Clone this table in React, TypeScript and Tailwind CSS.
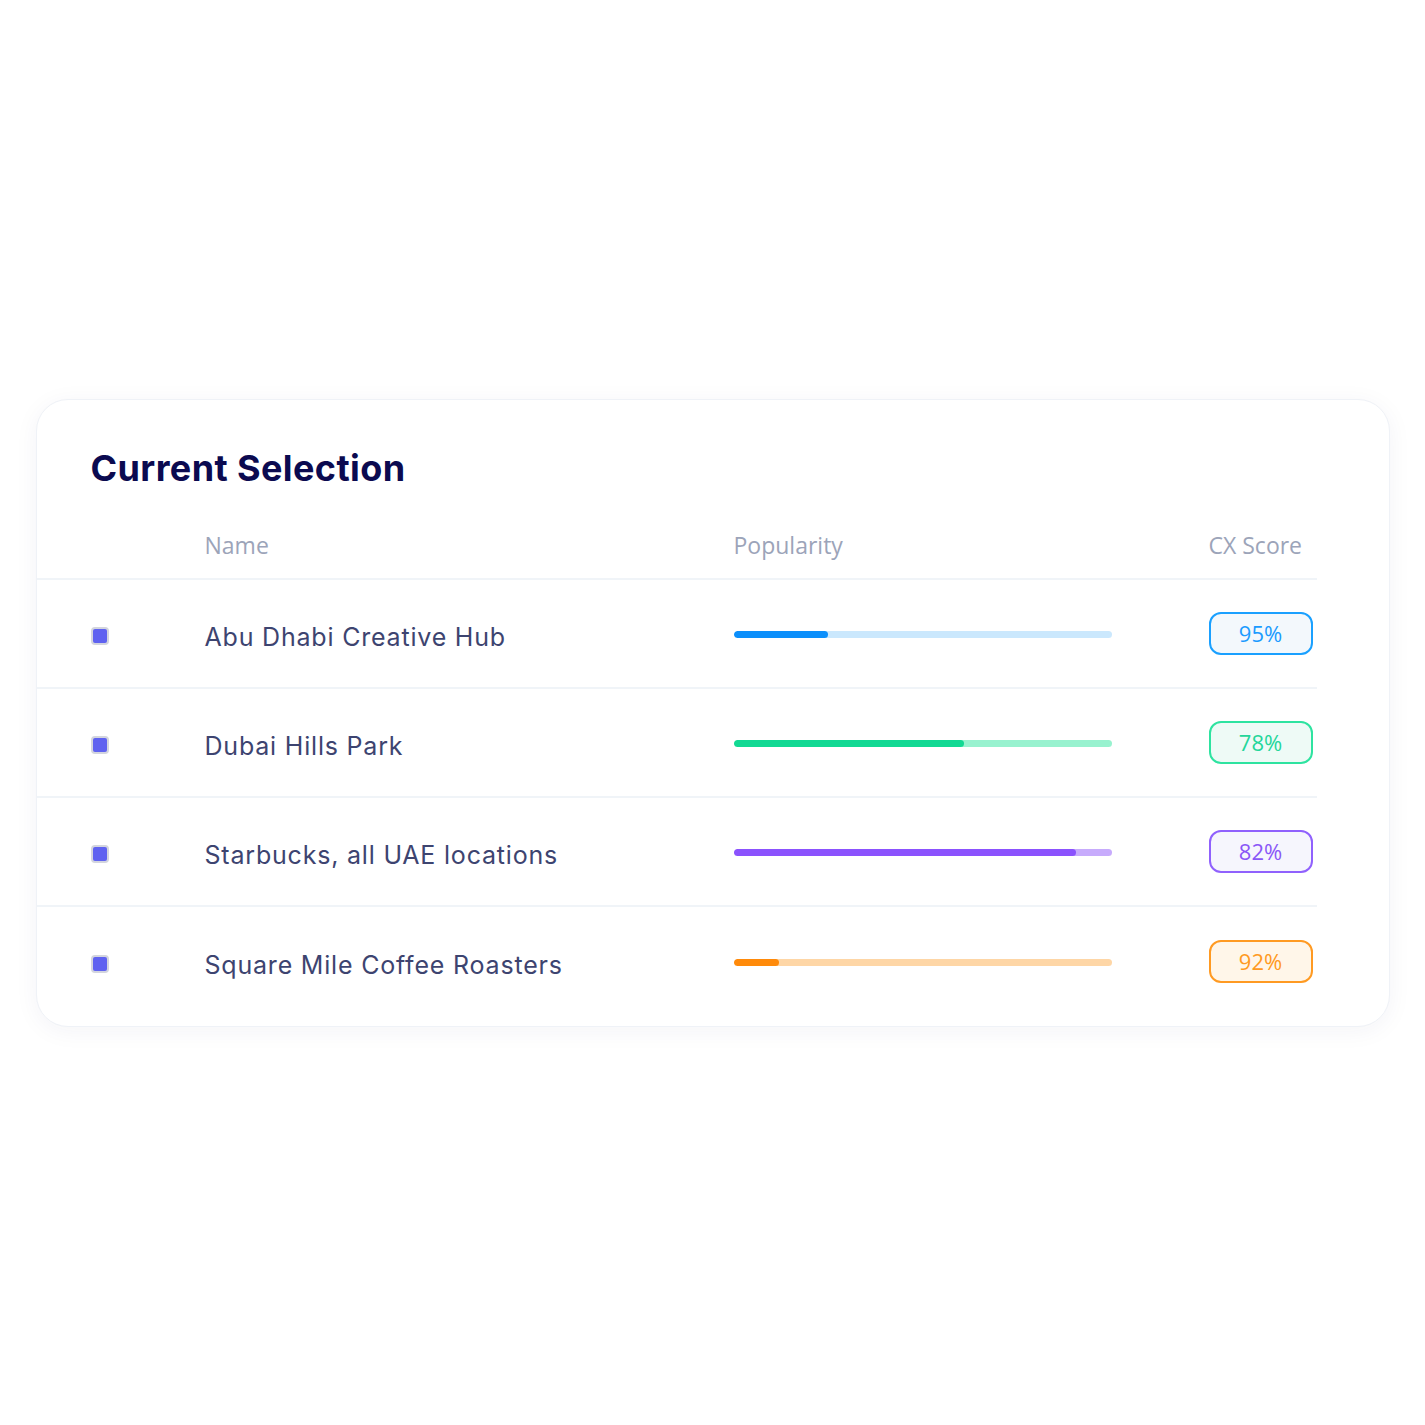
const rows = [
  {
    name: "Abu Dhabi Creative Hub",
    fill: 25,
    bar: "bg-[#0b8ffb]",
    track: "bg-[#cbe8fd]",
    score: "95%",
    badge: "border-[#1aa0ff] bg-[#f3f8fc] text-[#1a9bff]",
  },
  {
    name: "Dubai Hills Park",
    fill: 61,
    bar: "bg-[#12d993]",
    track: "bg-[#98f2cf]",
    score: "78%",
    badge: "border-[#2ee3a0] bg-[#eefaf6] text-[#24d69a]",
  },
  {
    name: "Starbucks, all UAE locations",
    fill: 90.5,
    bar: "bg-[#8b52fd]",
    track: "bg-[#c7abfc]",
    score: "82%",
    badge: "border-[#9061fd] bg-[#f6f6fd] text-[#8a57f7]",
  },
  {
    name: "Square Mile Coffee Roasters",
    fill: 12,
    bar: "bg-[#ff8a0a]",
    track: "bg-[#fed6a6]",
    score: "92%",
    badge: "border-[#ff9a22] bg-[#fff6e9] text-[#ff9a22]",
  },
];

export default function App() {
  return (
    <div className="min-h-[1425px] w-full bg-white flex items-center justify-center">
      <div className="w-[1354px] rounded-[32px] bg-white border border-[#eff2f7] shadow-[0_4px_24px_rgba(30,40,90,0.05)] pt-[40px] pb-[10px]">
        <h2 className="px-[54px] text-[36px] leading-[56px] font-bold text-[#0b0a50] [font-family:Inter,sans-serif] tracking-[0.4px]">
          Current Selection
        </h2>
        <div className="mr-[72px]">
          <div className="flex items-center pl-[54px] pt-[34px] pb-[18px] border-b-2 border-[#f0f4f8] text-[23px] leading-[30px] text-[#9ca4b9] [font-family:'Open_Sans',sans-serif]">
            <div className="w-[114px]" />
            <div className="w-[529px]">Name</div>
            <div className="w-[475px]">Popularity</div>
            <div>CX Score</div>
          </div>
          {rows.map((r, i) => (
            <div
              key={r.name}
              className={
                "flex items-center pl-[54px] h-[109px] " +
                (i < rows.length - 1 ? "border-b-2 border-[#f0f4f8]" : "")
              }
            >
              <div className="w-[114px] flex items-center">
                <span className="mt-[5px] size-[18px] rounded-[4px] bg-[#5f62f0] border-2 border-[#d3d5de]" />
              </div>
              <div className="w-[529px] pt-[9px] text-[25px] tracking-[0.8px] text-[#3d4470] [font-family:Inter,sans-serif]">
                {r.name}
              </div>
              <div className={"mt-[2px] w-[378px] h-[7px] rounded-full overflow-hidden " + r.track}>
                <div className={"h-full rounded-full " + r.bar} style={{ width: `${r.fill}%` }} />
              </div>
              <div className="w-[97px]" />
              <div
                className={
                  "w-[104px] h-[43px] rounded-[12px] border-2 flex items-center justify-center text-[22px] [font-family:'Open_Sans',sans-serif] " +
                  r.badge
                }
              >
                {r.score}
              </div>
            </div>
          ))}
        </div>
      </div>
    </div>
  );
}
